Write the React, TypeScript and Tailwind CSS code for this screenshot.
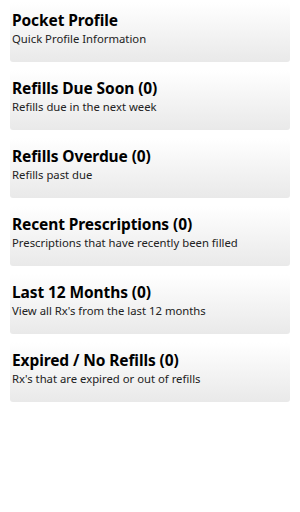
const items = [
  { title: "Pocket Profile", desc: "Quick Profile Information" },
  { title: "Refills Due Soon (0)", desc: "Refills due in the next week" },
  { title: "Refills Overdue (0)", desc: "Refills past due" },
  { title: "Recent Prescriptions (0)", desc: "Prescriptions that have recently been filled" },
  { title: "Last 12 Months (0)", desc: "View all Rx's from the last 12 months" },
  { title: "Expired / No Refills (0)", desc: "Rx's that are expired or out of refills" },
];

export default function App() {
  return (
    <div
      className="min-h-[512px] w-[300px] bg-white px-[10px] pt-[2px] text-black"
      style={{ fontFamily: '"Noto Sans", "Open Sans", sans-serif' }}
    >
      <div className="flex flex-col gap-[8px]">
        {items.map((it, i) => (
          <div
            key={i}
            className="h-[60px] rounded-[3px] bg-gradient-to-b from-white to-[#e9e9e9] px-[2px] pt-[8px]"
          >
            <div className="text-[15.5px] font-bold leading-[20px] tracking-[-0.1px]">{it.title}</div>
            <div className="mt-[1px] text-[11.3px] leading-[15px] text-[#222]">{it.desc}</div>
          </div>
        ))}
      </div>
    </div>
  );
}
